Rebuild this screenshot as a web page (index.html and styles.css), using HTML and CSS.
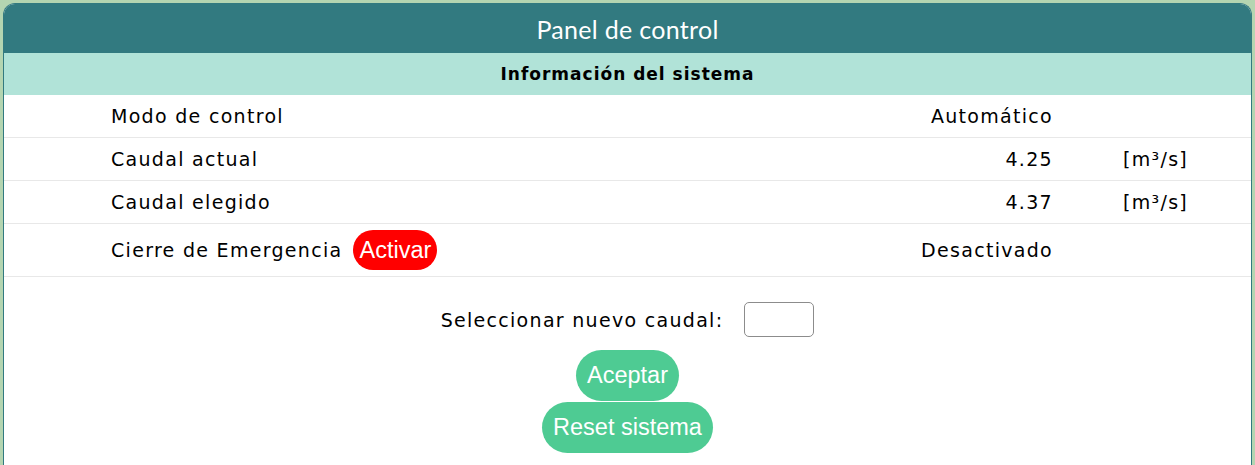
FILE: index.html
```html
<!DOCTYPE html>
<html lang="es">
<head>
<meta charset="utf-8">
<title>Panel de control</title>
<link rel="stylesheet" href="styles.css">
</head>
<body>
<div class="card">
  <header class="card-header">Panel de control</header>
  <div class="subheader">Información del sistema</div>
  <div class="rows">
    <div class="row">
      <span class="label">Modo de control</span>
      <span class="value">Automático</span>
      <span class="unit"></span>
    </div>
    <div class="row">
      <span class="label">Caudal actual</span>
      <span class="value">4.25</span>
      <span class="unit">[m³/s]</span>
    </div>
    <div class="row">
      <span class="label">Caudal elegido</span>
      <span class="value">4.37</span>
      <span class="unit">[m³/s]</span>
    </div>
    <div class="row row-tall">
      <span class="label">Cierre de Emergencia <button class="btn btn-red">Activar</button></span>
      <span class="value">Desactivado</span>
      <span class="unit"></span>
    </div>
  </div>
  <div class="form">
    <div class="form-line">
      <label class="form-label" for="caudal">Seleccionar nuevo caudal:</label>
      <input class="form-input" id="caudal" type="text">
    </div>
    <button class="btn btn-green">Aceptar</button>
    <button class="btn btn-green">Reset sistema</button>
  </div>
</div>
</body>
</html>
```

FILE: styles.css
```css
html, body {
  margin: 0;
  height: 100%;
}
body {
  background: #b4d5b1;
  padding: 3px 3px 0 3px;
  box-sizing: border-box;
  font-family: "DejaVu Sans", sans-serif;
  overflow: hidden;
}
.card {
  background: #ffffff;
  border: 1px solid #327a80;
  border-bottom: none;
  border-radius: 12px 12px 0 0;
  overflow: hidden;
  height: 470px;
}
.card-header {
  background: #327a80;
  color: #ffffff;
  font-family: "Lato", "Open Sans", sans-serif;
  font-size: 25px;
  height: 49px;
  display: flex;
  align-items: center;
  justify-content: center;
  letter-spacing: 0.3px;
}
.subheader {
  background: #b1e3d8;
  height: 42px;
  display: flex;
  align-items: center;
  justify-content: center;
  font-weight: bold;
  font-size: 17px;
  letter-spacing: 1px;
  color: #000;
}
.row {
  display: grid;
  grid-template-columns: 1fr auto 128px;
  column-gap: 70px;
  align-items: center;
  padding-left: 107px;
  height: 42px;
  border-bottom: 1px solid #e8e8e8;
  font-size: 19px;
  letter-spacing: 1.3px;
  color: #000;
}
.row-tall {
  height: 52px;
}
.label {
  display: flex;
  align-items: center;
  gap: 11px;
}
.value {
  text-align: right;
}
.btn {
  border: none;
  font-family: "Liberation Sans", Arial, sans-serif;
  font-size: 23.5px;
  color: #fff;
  letter-spacing: 0;
  cursor: pointer;
}
.btn-red {
  background: #ff0000;
  height: 40px;
  padding: 0 6px;
  border-radius: 20px;
}
.btn-green {
  background: #4ecb93;
  height: 51px;
  padding: 0 11px;
  border-radius: 26px;
  margin-bottom: 1px;
}
.form {
  display: flex;
  flex-direction: column;
  align-items: center;
  padding-top: 25px;
}
.form-line {
  display: flex;
  align-items: center;
  gap: 21px;
  margin-bottom: 13px;
}
.form-label {
  font-size: 19px;
  letter-spacing: 1.3px;
}
.form-input {
  width: 68px;
  height: 33px;
  border: 1px solid #8c8c8c;
  border-radius: 5px;
  padding: 0;
  margin: 0;
}
```
